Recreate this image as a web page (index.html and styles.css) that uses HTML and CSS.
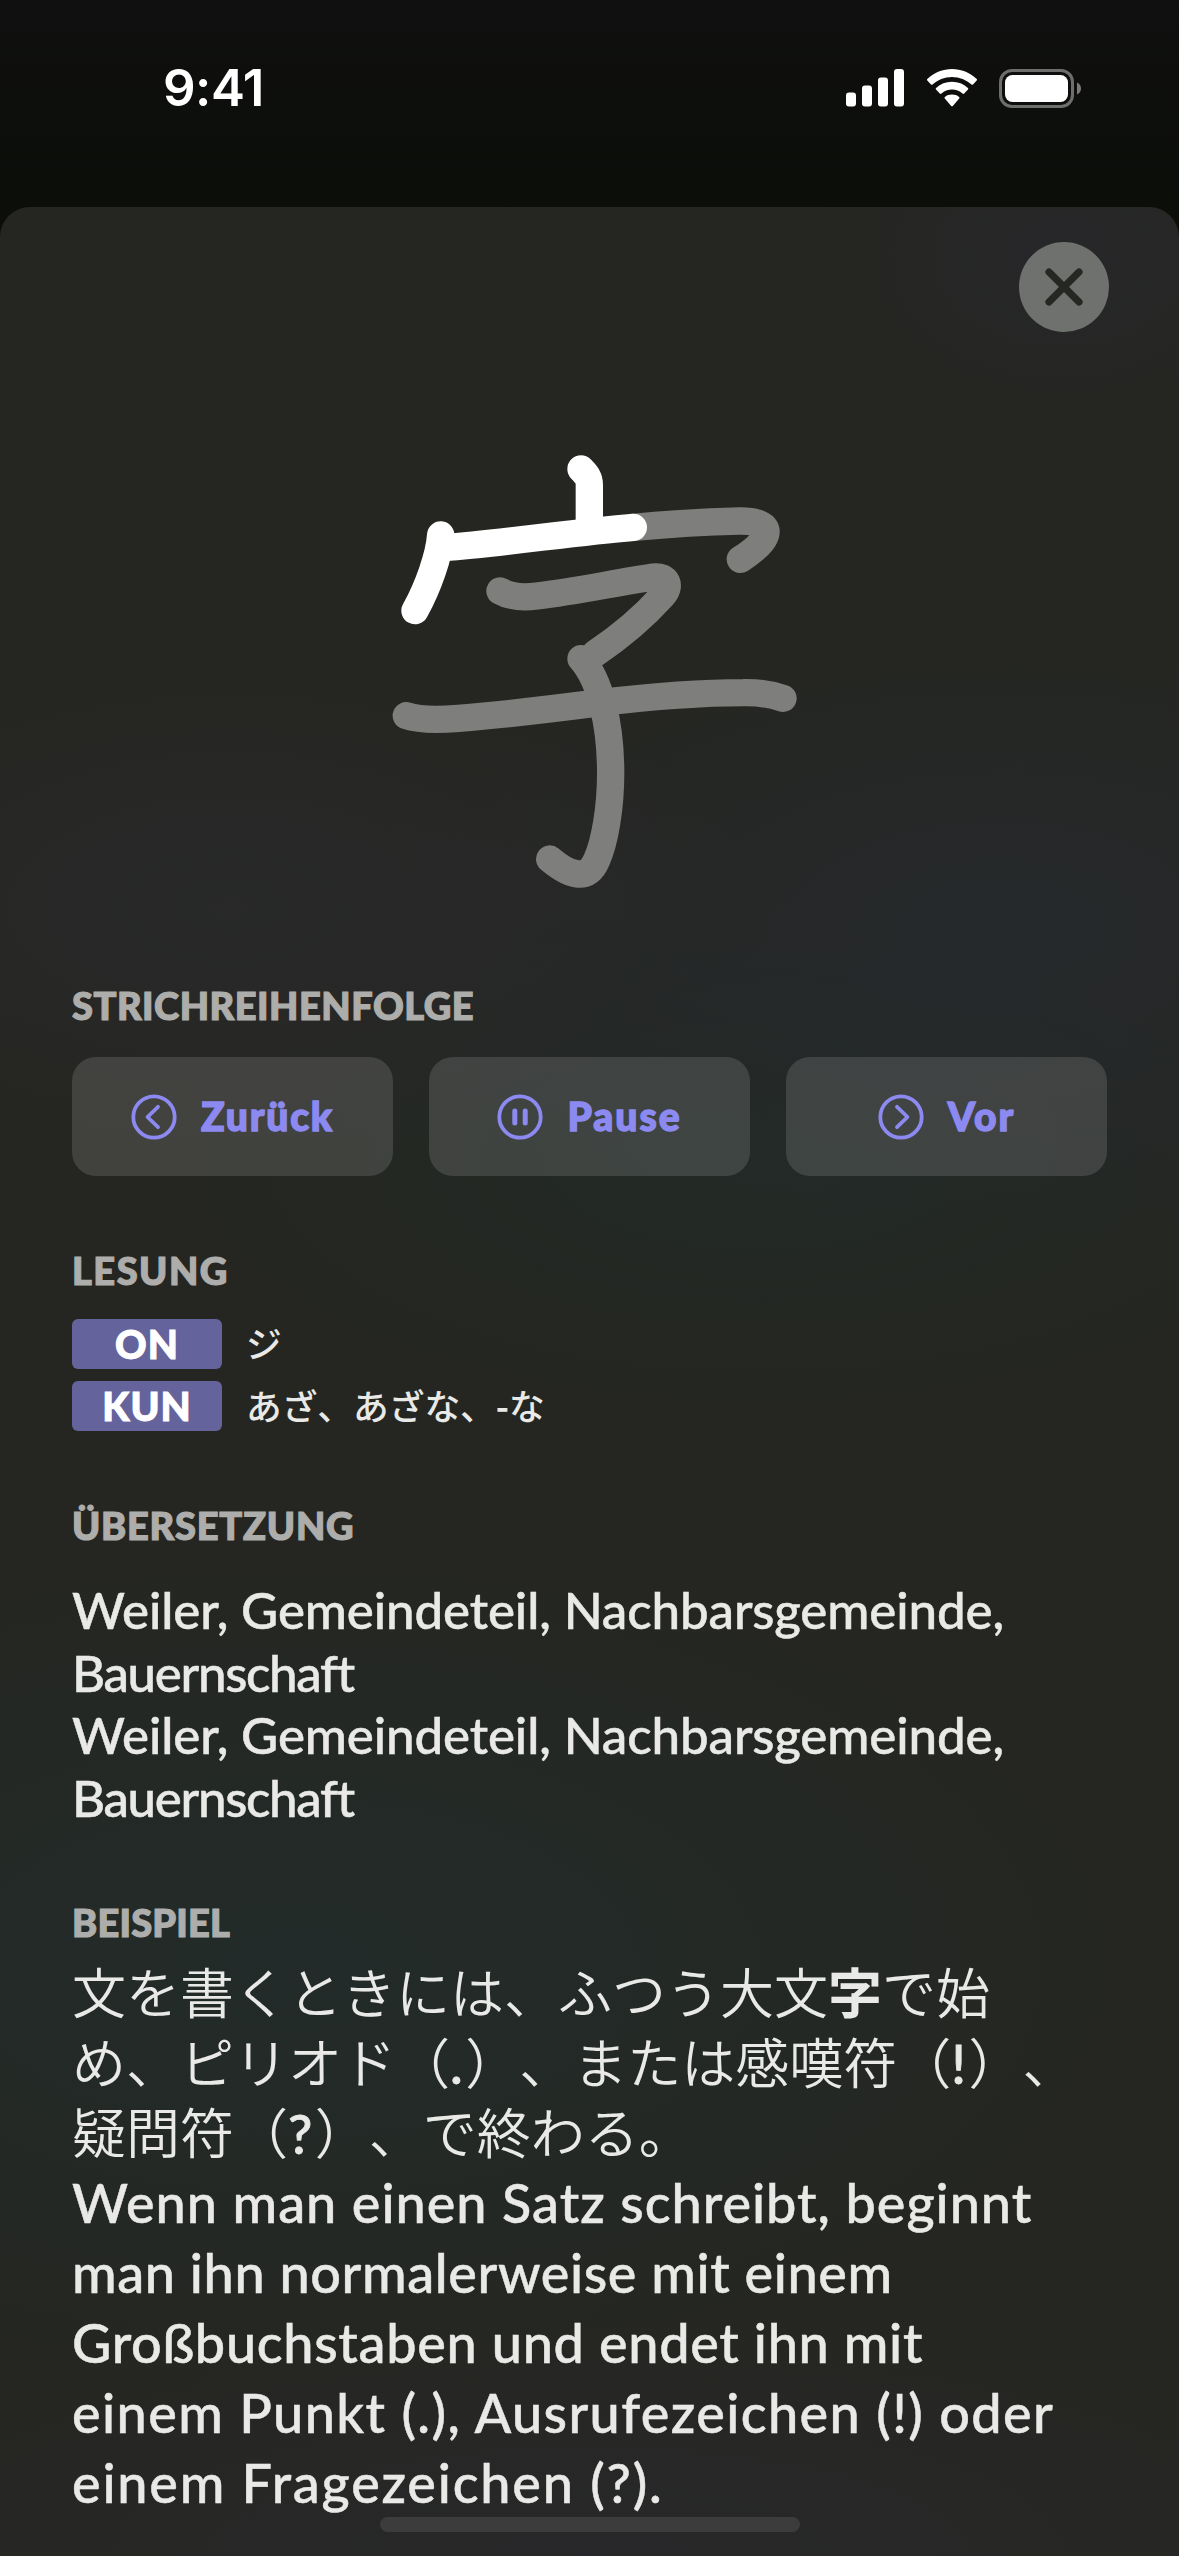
FILE: index.html
```html
<!DOCTYPE html>
<html lang="de">
<head>
<meta charset="utf-8">
<title>字</title>
<link rel="stylesheet" href="styles.css">
</head>
<body>
<header class="status">
  <span class="time">9:41</span>
  <div class="status-icons">
    <svg width="60" height="38" viewBox="0 0 60 38" fill="#fff"><rect x="0" y="23.500" width="10" height="14" rx="3"/><rect x="16" y="16.500" width="10" height="21" rx="3"/><rect x="32" y="8.500" width="10" height="29" rx="3"/><rect x="48" y="0" width="10" height="37.500" rx="3"/></svg>
    <svg class="wifi" width="52" height="38" viewBox="0 0 52 38" fill="#fff"><path d="M26 8C33.500 8 40.500 11 45.500 15.500Q46.300 16.200 47 15.500L50.700 11.600Q51.500 10.700 50.700 9.900C44 3.700 35 0 26 0S8 3.700 1.300 9.900Q.5 10.700 1.300 11.600L5 15.500Q5.700 16.200 6.500 15.500C11.500 11 18.500 8 26 8Z"/><path d="M26 20.500C30 20.500 33.700 22 36.500 24.500Q37.400 25.300 38.200 24.500L42 20.600Q42.800 19.700 41.900 18.900C37.600 15 32 12.800 26 12.800S14.400 15 10.100 18.900Q9.200 19.700 10 20.600L13.800 24.500Q14.600 25.300 15.500 24.500C18.300 22 22 20.500 26 20.500Z"/><path d="M33.200 29.500Q34 28.700 33.100 27.900C29.200 24.700 22.800 24.700 18.900 27.900Q18 28.700 18.800 29.500L25.200 36.900Q26 37.700 26.800 36.900Z"/></svg>
    <svg class="battery" width="83" height="39" viewBox="0 0 83 39"><rect x="1.500" y="1.500" width="72" height="36" rx="11.500" fill="none" stroke="#fff" stroke-opacity=".4" stroke-width="3"/><rect x="6" y="6" width="63" height="27" rx="7.500" fill="#fff"/><path d="M78 13.500V25.500C80.400 24.500 82 22.200 82 19.500S80.400 14.500 78 13.500Z" fill="#fff" fill-opacity=".45"/></svg>
  </div>
</header>
<main class="sheet">
  <button class="close" aria-label="Schließen"><svg width="90" height="90" viewBox="0 0 90 90"><circle cx="45" cy="45" r="45" fill="#6f716e"/><path d="M30 30L60 60M60 30L30 60" stroke="#252722" stroke-width="7.200" stroke-linecap="round"/></svg></button>
  <svg class="kanji" width="450" height="480" viewBox="0 0 1350 1440" fill="none" stroke-width="82" stroke-linecap="round" stroke-linejoin="round">
    <g stroke="#7e7e7c">
      <path d="M790 292Q960 276 1110 273C1188 272 1203 300 1175 335C1160 354 1138 371 1111 388"/>
      <path d="M390 483C420 500 455 504 500 498C620 484 730 459 850 441C892 436 905 468 877 498C812 570 755 617 676 670"/>
      <path d="M633 686C690 750 722 880 722 1030C722 1130 705 1235 680 1290C665 1325 645 1333 625 1332C600 1331 570 1313 539 1287"/>
      <path d="M109 857C150 871 205 870 265 865C400 854 530 839 690 818C850 799 1010 788 1120 788C1160 787 1198 791 1239 805"/>
    </g>
    <g stroke="#fff"><path d="M633 117C651 135 658 145 658 165V290"/><path d="M212 315C208 375 175 470 135 542"/><path d="M220 353C410 338 610 307 790 292"/></g>
  </svg>
  <section class="order">
    <h2 class="t-order">STRICHREIHENFOLGE</h2>
    <div class="buttons">
      <button class="btn"><svg width="46" height="46" viewBox="0 0 46 46"><circle cx="23" cy="23" r="20.700"/><path d="M27 12.800L16.500 23L27 33.200"/></svg><span class="t-back">Zurück</span></button>
      <button class="btn"><svg width="46" height="46" viewBox="0 0 46 46"><circle cx="23" cy="23" r="20.700"/><path class="bars" d="M17.800 17V29M28.200 17V29"/></svg><span class="t-pause">Pause</span></button>
      <button class="btn"><svg width="46" height="46" viewBox="0 0 46 46"><circle cx="23" cy="23" r="20.700"/><path d="M19 12.800L29.500 23L19 33.200"/></svg><span class="t-next">Vor</span></button>
    </div>
  </section>
  <section class="reading">
    <h2 class="t-reading">LESUNG</h2>
    <div class="row"><span class="tag">ON</span><span class="kana" lang="ja">ジ</span></div>
    <div class="row"><span class="tag">KUN</span><span class="kana" lang="ja">あざ、あざな、<b>-</b>な</span></div>
  </section>
  <section class="translation">
    <h2 class="t-trans">ÜBERSETZUNG</h2>
    <p><span class="w1">Weiler, Gemeindeteil, Nachbarsgemeinde,</span><span class="w2">Bauernschaft</span><span class="w1">Weiler, Gemeindeteil, Nachbarsgemeinde,</span><span class="w2">Bauernschaft</span></p>
  </section>
  <section class="example">
    <h2 class="t-example">BEISPIEL</h2>
    <p class="jp" lang="ja"><span>文を書くときには、ふつう大文<b>字</b>で始</span><span>め、ピリオド（<i>.</i>）、または感嘆符（<i>!</i>）、</span><span>疑問符（<i>?</i>）、で終わる。</span></p>
    <p class="de"><span class="l1">Wenn man einen Satz schreibt, beginnt</span><span class="l2">man ihn normalerweise mit einem</span><span class="l3">Großbuchstaben und endet ihn mit</span><span class="l4">einem Punkt (.), Ausrufezeichen (!) oder</span><span class="l5">einem Fragezeichen (?).</span></p>
  </section>
</main>
<div class="home"></div>
</body>
</html>
```
FILE: styles.css
```css
* { box-sizing: border-box; }
body { margin: 0; width: 1179px; height: 2556px; overflow: hidden; position: relative; background: linear-gradient(#0f100f, #0c0e0a 207px); font-family: Lato, "Noto Sans CJK JP", sans-serif; color: #e9eae7; display: flex; flex-direction: column; }
h2, p { margin: 0; }
svg { display: block; flex: none; }
button { border: 0; padding: 0; background: none; font: inherit; }
.status { height: 207px; flex: none; padding: 68px 97px 0 163px; display: flex; justify-content: space-between; align-items: flex-start; }
.time { font: 600 51px/40px Inter, sans-serif; letter-spacing: -.5px; color: #fff; }
.status-icons { display: flex; align-items: flex-start; padding-top: 1px; }
.wifi { margin-left: 20px; }
.battery { margin-left: 21px; }
.sheet { flex: 1; min-height: 0; border-radius: 30px 30px 0 0; padding: 35px 72px 0; display: flex; flex-direction: column;
  background:
    radial-gradient(ellipse 520px 260px at 230px 700px, #2a2a2eb0, #2a2a2e00),
    radial-gradient(ellipse 650px 320px at 1000px 720px, #26292ed0, #26292e00),
    radial-gradient(ellipse 600px 260px at 760px 950px, #212b28c0, #212b2800),
    radial-gradient(ellipse 850px 420px at 300px 1760px, #222c2be0, #222c2b00),
    radial-gradient(ellipse 900px 260px at 590px 2349px, #28282a, #28282a00),
    radial-gradient(ellipse 250px 180px at 1060px 50px, #27272a, #27272a00),
    #252621; }
.close { align-self: flex-end; margin-right: -2px; width: 90px; height: 90px; }
.kanji { margin: 98px 0 0 298px; }
h2 { font-weight: 900; font-size: 38px; line-height: 46px; color: #adadab; white-space: nowrap; -webkit-text-stroke: 1.200px currentColor; }
.t-order { letter-spacing: .5px; }
.t-reading { letter-spacing: 1.500px; }
.t-trans { letter-spacing: .75px; }
.t-example { letter-spacing: .2px; }
.order { margin-top: 72px; }
.buttons { margin-top: 29px; display: grid; grid-template-columns: repeat(3, 321px); gap: 36px; }
.btn { height: 119px; border-radius: 24px; background: rgba(255,255,255,.13); display: flex; align-items: center; justify-content: center; gap: 24px; color: #8c8af0; font-weight: 900; font-size: 39px; }
.btn svg { fill: none; stroke: #8c8af0; stroke-width: 3.8; stroke-linecap: round; stroke-linejoin: round; }
.btn .bars { stroke-width: 5; }
.btn span { -webkit-text-stroke: 1.400px currentColor; padding-bottom: 1px; }
.t-back { letter-spacing: 1.800px; }
.t-pause { letter-spacing: 2px; }
.t-next { letter-spacing: 2px; }
.reading { margin-top: 71px; display: flex; flex-direction: column; gap: 12px; }
.reading h2 { margin-bottom: 14px; }
.row { display: flex; gap: 24px; align-items: center; height: 50px; }
.tag { width: 150px; height: 50px; border-radius: 6px; background: #65639c; color: #fff; font-weight: 900; font-size: 39px; line-height: 50px; text-align: center; letter-spacing: 1px; -webkit-text-stroke: 1px currentColor; }
.kana { font: 500 35.700px/48px "Noto Sans CJK JP", sans-serif; white-space: nowrap; padding-bottom: 2px; }
.translation { margin-top: 71px; }
.translation p { margin-top: 31px; font-size: 51px; line-height: 62.700px; }
.translation p, .de { font-weight: 500; -webkit-text-stroke: .5px currentColor; }
.w1 { letter-spacing: -.1px; }
.w2 { letter-spacing: -1.300px; }
p span { display: block; white-space: nowrap; }
.example { margin-top: 69px; }
.jp { margin-top: 11px; font: 350 54px/70px "Noto Sans CJK JP", sans-serif; text-spacing-trim: space-all; }
.jp i { font: 500 54px/60px Lato, sans-serif; letter-spacing: 2.500px; -webkit-text-stroke: .8px currentColor; }
.de { margin-top: 2px; font-size: 54px; line-height: 70px; }
.l1 { letter-spacing: .97px; }
.l2 { letter-spacing: .6px; }
.l3 { letter-spacing: .69px; }
.l4 { letter-spacing: 1.400px; }
.l5 { letter-spacing: 1.800px; }
.home { position: absolute; left: 380px; top: 2517px; width: 420px; height: 15px; border-radius: 8px; background: #3c3c3c; }
```
